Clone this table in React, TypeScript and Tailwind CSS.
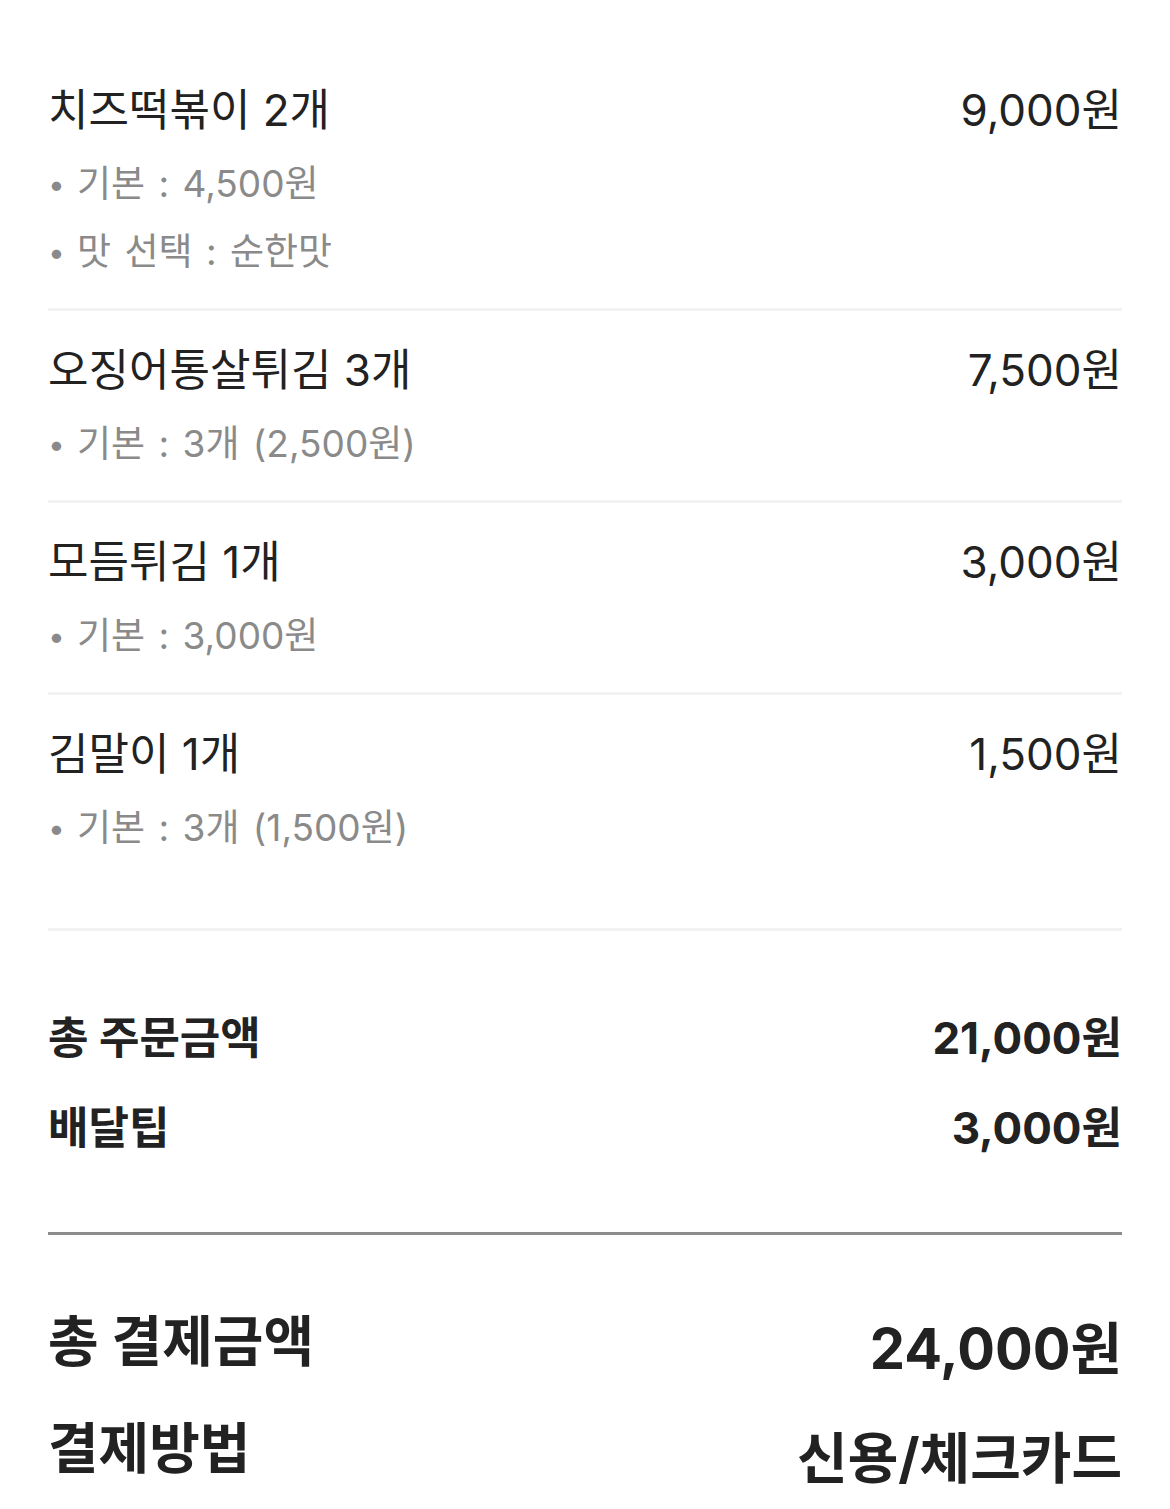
const font = { fontFamily: 'Inter, "Noto Sans CJK KR", sans-serif' };

type Item = { name: string; price: string; options: string[] };

const items: Item[] = [
  { name: '치즈떡볶이 2개', price: '9,000원', options: ['기본 : 4,500원', '맛 선택 : 순한맛'] },
  { name: '오징어통살튀김 3개', price: '7,500원', options: ['기본 : 3개 (2,500원)'] },
  { name: '모듬튀김 1개', price: '3,000원', options: ['기본 : 3,000원'] },
  { name: '김말이 1개', price: '1,500원', options: ['기본 : 3개 (1,500원)'] },
];

function OrderItem({ item, last }: { item: Item; last: boolean }) {
  return (
    <div className={`pt-[29px] ${last ? 'pb-[66px]' : 'pb-[22px]'} border-b-[3px] border-[#f2f2f2]`}>
      <div className="flex items-center justify-between h-[60px] text-[44px] text-[#222]">
        <span>{item.name}</span>
        <span>{item.price}</span>
      </div>
      <ul className="mt-[10px]">
        {item.options.map(o => (
          <li key={o} className="flex items-center h-[68px] text-[37px] text-[#8a8a8a] [word-spacing:3px]">
            <span className="w-[29px] text-[30px]">•</span>
            <span>{o}</span>
          </li>
        ))}
      </ul>
    </div>
  );
}

export default function App() {
  return (
    <div className="bg-white w-[1170px] min-h-[1509px] px-[48px] pt-[51px]" style={font}>
      {items.map((it, i) => (
        <OrderItem key={it.name} item={it} last={i === items.length - 1} />
      ))}

      <div className="pt-[77px] pb-[74px] flex flex-col gap-[30px] border-b-[3px] border-[#8c8c8c]">
        <div className="flex items-center justify-between h-[60px] text-[44px] font-bold text-[#222]">
          <span>총 주문금액</span>
          <span>21,000원</span>
        </div>
        <div className="flex items-center justify-between h-[60px] text-[44px] font-bold text-[#222]">
          <span>배달팁</span>
          <span>3,000원</span>
        </div>
      </div>

      <div className="pt-[71px] flex flex-col gap-[29px]">
        <div className="flex justify-between text-[#222] font-bold">
          <span className="h-[70px] leading-[70px] text-[55px]">총 결제금액</span>
          <span className="h-[70px] leading-[70px] mt-[8px] text-[56px]">24,000원</span>
        </div>
        <div className="flex justify-between text-[#222] font-bold">
          <span className="h-[70px] leading-[70px] text-[55px]">결제방법</span>
          <span className="h-[70px] leading-[70px] mt-[10px] text-[55px]">신용/체크카드</span>
        </div>
      </div>
    </div>
  );
}
